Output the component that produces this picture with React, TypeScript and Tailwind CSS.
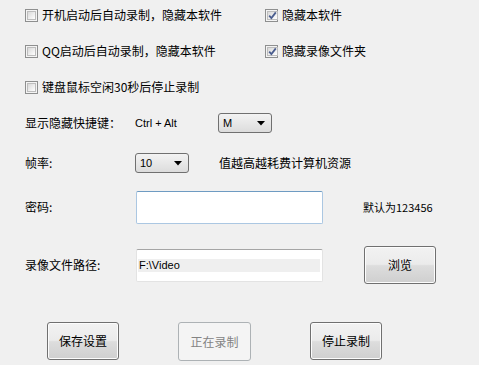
import React from "react";

const CJK = { fontFamily: '"Noto Sans CJK SC", "Noto Sans", sans-serif' } as React.CSSProperties;
const LAT = { fontFamily: '"Liberation Sans", "Noto Sans CJK SC", sans-serif' } as React.CSSProperties;

function Check({ checked, label }: { checked?: boolean; label: string }) {
  return (
    <div className="flex items-center gap-[4px]">
      <div className="w-[13px] h-[13px] border border-[#8e8f8f] bg-[#f4f4f4] p-[1px] flex">
        <div className="flex-1 bg-gradient-to-br from-[#d9d9d9] via-[#ececec] to-[#ffffff] border border-[#bdbdbd] flex items-center justify-center">
          {checked && (
            <svg width="9" height="9" viewBox="0 0 9 9">
              <path d="M1.2 4.6 L3.4 7 L7.8 1.4" fill="none" stroke="#4a5d8e" strokeWidth="1.8" />
            </svg>
          )}
        </div>
      </div>
      <span className="text-[12px] text-black leading-none" style={CJK}>{label}</span>
    </div>
  );
}

function Combo({ value, w }: { value: string; w: string }) {
  return (
    <div className={`${w} h-[20px] border border-[#707070] rounded-[3px] bg-gradient-to-b from-[#f3f3f3] to-[#dcdcdc] flex items-center justify-between pl-[4px] pr-[6px]`}>
      <span className="text-[11px] text-black leading-none" style={LAT}>{value}</span>
      <svg width="8" height="5" viewBox="0 0 8 5"><path d="M0 0 H8 L4 4.5 Z" fill="#000" /></svg>
    </div>
  );
}

function Btn({ label, disabled }: { label: string; disabled?: boolean }) {
  return disabled ? (
    <div className="w-[73px] h-[39px] border border-[#adb2b5] rounded-[3px] bg-[#f4f4f4] flex items-center justify-center">
      <span className="text-[12px] text-[#838383]" style={CJK}>{label}</span>
    </div>
  ) : (
    <div className="w-[72px] h-[38px] border border-[#707070] rounded-[3px] bg-[linear-gradient(to_bottom,#f2f2f2_0%,#ebebeb_48%,#dddddd_52%,#cfcfcf_100%)] flex items-center justify-center shadow-[inset_0_0_0_1px_#fcfcfc]">
      <span className="text-[12px] text-black" style={CJK}>{label}</span>
    </div>
  );
}

export default function App() {
  return (
    <div className="w-[479px] h-[365px] bg-[#f0f0f0] pl-[25px] flex flex-col overflow-hidden">
      <div className="h-[30px] flex items-center">
        <div className="w-[240px]"><Check label="开机启动后自动录制，隐藏本软件" /></div>
        <Check checked label="隐藏本软件" />
      </div>
      <div className="h-[42px] flex items-center">
        <div className="w-[240px]"><Check label="QQ启动后自动录制，隐藏本软件" /></div>
        <Check checked label="隐藏录像文件夹" />
      </div>
      <div className="h-[30px] flex items-center">
        <Check label="键盘鼠标空闲30秒后停止录制" />
      </div>
      <div className="h-[42px] flex items-center">
        <div className="w-[110px] text-[12px] text-black" style={CJK}>显示隐藏快捷键：</div>
        <div className="w-[83px] text-[11px] text-black" style={LAT}>Ctrl + Alt</div>
        <Combo value="M" w="w-[54px]" />
      </div>
      <div className="h-[38px] flex items-center">
        <div className="w-[110px] text-[12px] text-black" style={CJK}>帧率:</div>
        <div className="w-[84px]"><Combo value="10" w="w-[54px]" /></div>
        <div className="text-[12px] text-black" style={CJK}>值越高越耗费计算机资源</div>
      </div>
      <div className="h-[50px] flex items-center">
        <div className="w-[111px] text-[12px] text-black" style={CJK}>密码:</div>
        <div className="w-[187px] h-[33px] bg-white border border-[#abc7e2] border-t-[#6e9bc2] rounded-[2px]"></div>
        <div className="ml-[40px] text-[11px] text-black" style={CJK}>默认为123456</div>
      </div>
      <div className="h-[66px] flex items-center">
        <div className="w-[111px] text-[12px] text-black" style={CJK}>录像文件路径:</div>
        <div className="w-[187px] h-[33px] bg-white border border-[#e3e3e3] border-t-[#a5a5a5] rounded-[2px] flex flex-col justify-center pl-[1px] pr-[2px]">
          <div className="h-[13px] bg-[#efefef] flex items-center pl-[1px]">
            <span className="text-[11px] text-black leading-none" style={LAT}>F:\Video</span>
          </div>
        </div>
        <div className="ml-[41px]"><Btn label="浏览" /></div>
      </div>
      <div className="mt-[24px] flex items-start pl-[22px]">
        <Btn label="保存设置" />
        <div className="ml-[59px]"><Btn label="正在录制" disabled /></div>
        <div className="ml-[59px]"><Btn label="停止录制" /></div>
      </div>
    </div>
  );
}
